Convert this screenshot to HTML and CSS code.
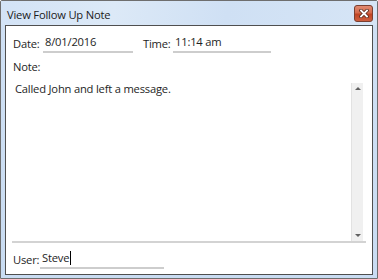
FILE: index.html
```html
<!DOCTYPE html>
<html>
<head>
<meta charset="utf-8">
<link rel="stylesheet" href="styles.css">
</head>
<body>
<div class="window">
  <div class="titlebar">
    <span class="title">View Follow Up Note</span>
    <div class="close" role="button" aria-label="Close">
      <svg width="10" height="9" viewBox="0 0 10 9">
        <path d="M2 1.5 L8 7.5 M8 1.5 L2 7.5" stroke="#5a2a1c" stroke-width="3.4" stroke-linecap="square"/>
        <path d="M2 1.5 L8 7.5 M8 1.5 L2 7.5" stroke="#ffffff" stroke-width="1.8" stroke-linecap="square"/>
      </svg>
    </div>
  </div>
  <div class="client">
    <div class="row">
      <span class="label">Date:</span>
      <span class="field date">8/01/2016</span>
      <span class="label time-label">Time:</span>
      <span class="field time">11:14 am</span>
    </div>
    <div class="note-label">Note:</div>
    <div class="notebox">
      <div class="notetext">Called John and left a message.</div>
      <div class="scrollbar">
        <span class="arrow up"></span>
        <span class="arrow down"></span>
      </div>
    </div>
    <div class="row user-row">
      <span class="label">User:</span>
      <span class="field user">Steve<span class="caret"></span></span>
    </div>
  </div>
</div>
</body>
</html>
```
FILE: styles.css
```css
* { box-sizing: border-box; }
html, body { margin: 0; padding: 0; background: #ffffff; }
body {
  font-family: "Open Sans", "Noto Sans", sans-serif;
  font-size: 11.2px;
  letter-spacing: -0.2px;
  color: #1e1e1e;
}
.window {
  width: 378px;
  height: 279px;
  border: 1px solid #6e6e6e;
  border-radius: 2px 2px 0 0;
  background: linear-gradient(180deg, #dbe7f5 0%, #cfe0f4 10%, #c9dcf2 100%);
  display: flex;
  flex-direction: column;
  padding: 0 4px 3px 4px;
}
.titlebar {
  height: 24px;
  flex: none;
  display: flex;
  align-items: center;
  justify-content: space-between;
  background: linear-gradient(100deg, #d3e3f6 0%, #dce9f7 30%, #cfe0f4 60%, #d6e5f6 100%);
  margin: 0 -4px;
  padding: 0 4px 0 6px;
}
.title {
  color: #1b1b1b;
  padding-top: 2px;
}
.close {
  width: 19px;
  height: 17px;
  border: 1px solid #7a4032;
  border-radius: 3px;
  background-color: #cc5b3d;
  background-image: linear-gradient(180deg, #e08a72 0%, #d46a4c 45%, #c04423 55%, #cd5f3f 100%);
  display: flex;
  align-items: center;
  justify-content: center;
  margin-top: 1px;
}
.client {
  flex: 1;
  background: #ffffff;
  border: 1px solid #4f4f4f;
  display: flex;
  flex-direction: column;
  padding: 7px 6px 0 7px;
}
.row {
  display: flex;
  align-items: flex-end;
  height: 20px;
}
.label {
  line-height: 18px;
  width: 30px;
  flex: none;
}
.field {
  height: 20px;
  line-height: 18px;
  padding-left: 2px;
  border-bottom: 2px solid #cdcdcd;
  flex: none;
}
.date { width: 90px; }
.time-label { margin-left: 10px; }
.time { width: 98px; }
.note-label {
  margin-top: 5px;
  line-height: 18px;
}
.notebox {
  margin: 4px 0 0 -1px;
  height: 163px;
  display: flex;
  border-bottom: 2px solid #d3d3d3;
}
.notetext {
  flex: 1;
  padding: 0 0 0 3px;
  line-height: 18px;
}
.scrollbar {
  width: 12px;
  margin: 3px 3px 0 0;
  background: #f0f0f0;
  border-left: 1px solid #e2e2e2;
  display: flex;
  flex-direction: column;
  justify-content: space-between;
  align-items: center;
  padding: 4px 0 4px 0;
}
.arrow {
  width: 0;
  height: 0;
  border-left: 3px solid transparent;
  border-right: 3px solid transparent;
}
.arrow.up { border-bottom: 3px solid #606060; }
.arrow.down { border-top: 3px solid #606060; }
.user-row {
  margin-top: 6px;
}
.user-row .label { width: 27px; }
.user {
  width: 124px;
}
.caret {
  display: inline-block;
  width: 1px;
  height: 14px;
  background: #000;
  vertical-align: -3px;
  margin-left: 1px;
}
```
